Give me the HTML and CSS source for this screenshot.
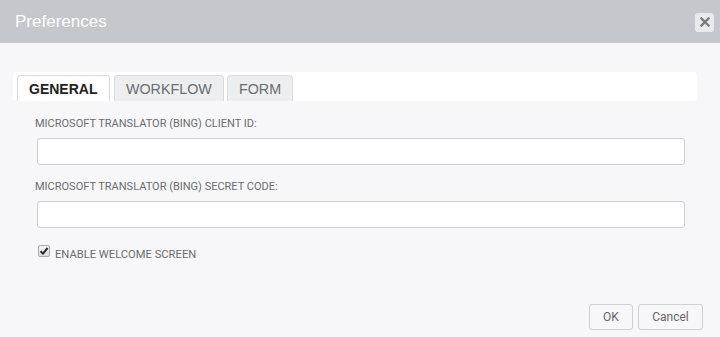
FILE: index.html
```html
<!DOCTYPE html>
<html>
<head>
<meta charset="utf-8">
<link rel="stylesheet" href="styles.css">
</head>
<body>
<div class="dialog">
  <div class="header">
    <div class="title">Preferences</div>
    <button class="close" aria-label="Close">
      <svg width="10" height="10" viewBox="0 0 10 10"><path d="M1.5 1.5 L8.5 8.5 M8.5 1.5 L1.5 8.5" stroke="#7b7d80" stroke-width="2.4" stroke-linecap="square"/></svg>
    </button>
  </div>
  <div class="body">
    <div class="tabs">
      <div class="tab active">GENERAL</div>
      <div class="tab">WORKFLOW</div>
      <div class="tab">FORM</div>
    </div>
    <div class="form">
      <label class="lbl">MICROSOFT TRANSLATOR (BING) CLIENT ID:</label>
      <input class="inp" type="text">
      <label class="lbl">MICROSOFT TRANSLATOR (BING) SECRET CODE:</label>
      <input class="inp" type="text">
      <label class="check">
        <span class="box"><svg width="10" height="10" viewBox="0 0 10 10"><path d="M1.6 5.2 L4 7.6 L8.6 2" fill="none" stroke="#2a2a2a" stroke-width="2"/></svg></span>
        <span class="ctext">ENABLE WELCOME SCREEN</span>
      </label>
    </div>
    <div class="footer">
      <button class="btn ok">OK</button>
      <button class="btn cancel">Cancel</button>
    </div>
  </div>
</div>
</body>
</html>
```
FILE: styles.css
```css
* { box-sizing: border-box; }
html, body { margin: 0; padding: 0; }
body { width: 720px; height: 337px; overflow: hidden; background: #f7f7f9; font-family: "Liberation Sans", Arial, sans-serif; }
.dialog { display: flex; flex-direction: column; height: 337px; }
.header { height: 43px; background: #c4c7cb; display: flex; align-items: center; justify-content: space-between; padding: 0 6px 0 15px; }
.title { color: #fff; font-size: 17px; }
.close { width: 19px; height: 19px; border: none; border-radius: 3px; background: #e9eaec; padding: 0; display: flex; align-items: center; justify-content: center; margin-top: 1px; }
.body { flex: 1; display: flex; flex-direction: column; padding: 29px 23px 0 13px; }
.tabs { background: #fff; border-radius: 4px; height: 29px; display: flex; align-items: flex-end; padding-left: 4px; gap: 4px; }
.tab { height: 26px; border: 1px solid #d8dadd; border-bottom: none; border-radius: 4px 4px 0 0; background: #eceef0; color: #6a6c6e; font-size: 14px; display: flex; align-items: center; padding: 1px 11px 0; }
.tab.active { background: #fff; color: #222; font-weight: bold; width: 93px; }
.tab:nth-child(2) { width: 110px; font-size: 14.3px; }
.tab:nth-child(3) { width: 66px; margin-left: -1px; font-size: 14.3px; }
.form { display: flex; flex-direction: column; padding: 16px 0 0 22px; }
.lbl { font-family: Roboto, sans-serif; font-size: 11px; color: #6a6c70; height: 14px; line-height: 14px; margin-bottom: 7px; }
.inp { width: 648px; height: 27px; border: 1px solid #cfd0d2; border-radius: 3px; background: #fff; margin: 0 0 15px 2px; }
.check { display: flex; align-items: flex-start; font-family: Roboto, sans-serif; color: #6a6c70; margin-top: 2px; }
.box { width: 12px; height: 12px; border: 1px solid #a9abad; border-radius: 2px; background: linear-gradient(#f4f4f4, #dcdcdc); margin: 0 5px 0 3px; display: flex; align-items: center; justify-content: center; }
.ctext { font-size: 11.2px; line-height: 14px; margin-top: 3px; }
.footer { margin-top: auto; display: flex; justify-content: flex-end; gap: 5px; padding-bottom: 7px; margin-right: -6px; }
.btn { height: 26px; border: 1px solid #cfd0d2; border-radius: 3px; background: #f7f7f9; font-family: Roboto, sans-serif; font-size: 12px; color: #666; padding: 0; }
.btn.ok { width: 44px; }
.btn.cancel { width: 65px; }
```
